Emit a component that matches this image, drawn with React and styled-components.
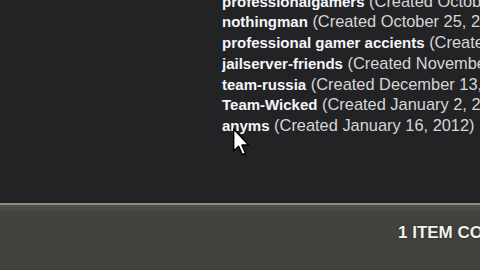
import React from 'react';
import styled, { createGlobalStyle } from 'styled-components';

const GlobalStyle = createGlobalStyle`
    html, body {
        margin: 0;
        padding: 0;
        background: #232325;
        overflow: hidden;
    }
    #root {
        width: 480px;
        height: 270px;
    }
`;

const groups = [
    { name: 'professionalgamers', created: 'October 21, 2011' },
    { name: 'nothingman', created: 'October 25, 2011' },
    { name: 'professional gamer accients', created: 'November 2, 2011' },
    { name: 'jailserver-friends', created: 'November 20, 2011' },
    { name: 'team-russia', created: 'December 13, 2011' },
    { name: 'Team-Wicked', created: 'January 2, 2012' },
    { name: 'anyms', created: 'January 16, 2012' },
];

export default function App(){
    return(
        <Page>
            <GlobalStyle/>
            <Content>
                <GroupList>
                    {groups.map((group) => (
                        <GroupRow key={group.name}>
                            <GroupName>{group.name}</GroupName>
                            <CreatedText> (Created {group.created})</CreatedText>
                        </GroupRow>
                    ))}
                </GroupList>
                <Cursor viewBox="0 0 12 20" width="17" height="29">
                    <path d="M0.5 0.5 L0.5 16 L4 12.6 L6.6 18.6 L8.8 17.6 L6.3 11.8 L11 11.8 Z"
                        fill="#ffffff" stroke="#000000" strokeWidth="1" strokeLinejoin="round"/>
                </Cursor>
            </Content>
            <Footer>
                <FooterText>1 ITEM COMPARED</FooterText>
            </Footer>
        </Page>
    )
}

const Page = styled.div`
    display: flex;
    flex-direction: column;
    width: 480px;
    height: 270px;
    overflow: hidden;
    background: #232325;
`;

const Content = styled.div`
    position: relative;
    height: 203px;
    padding-left: 222px;
    overflow: hidden;
`;

const GroupList = styled.div`
    display: flex;
    flex-direction: column;
    margin-top: -8.5px;
`;

const GroupRow = styled.div`
    height: 20.8px;
    font-family: "Liberation Sans", Arial, sans-serif;
    font-size: 15px;
    line-height: 20.8px;
    white-space: nowrap;
`;

const GroupName = styled.span`
    font-weight: 700;
    color: #f4f6fb;
`;

const CreatedText = styled.span`
    font-size: 16.4px;
    line-height: 1;
    color: #d6d6d8;
`;

const Cursor = styled.svg`
    position: absolute;
    left: 233px;
    top: 128px;
`;

const Footer = styled.div`
    flex: 1;
    display: flex;
    padding: 20px 0 0 398px;
    background: linear-gradient(to bottom, #8a8c85 0, #8a8c85 2px, #50514b 2px, #4a4b46 7px, #41413d 9px, #41413d 100%);
    overflow: hidden;
`;

const FooterText = styled.div`
    font-family: "Liberation Sans", Arial, sans-serif;
    font-size: 17px;
    font-weight: 700;
    line-height: 19px;
    color: #f2f2ea;
    white-space: nowrap;
    text-shadow: 0 0 2px rgba(0,0,0,0.6);
`;
